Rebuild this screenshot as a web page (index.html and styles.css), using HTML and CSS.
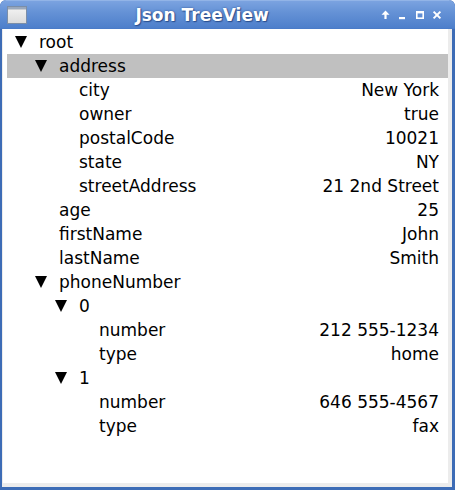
FILE: index.html
```html
<!DOCTYPE html>
<html>
<head>
<meta charset="utf-8">
<title>Json TreeView</title>
<link rel="stylesheet" href="styles.css">
</head>
<body>
<div class="window">
  <div class="titlebar">
    <div class="appicon"><div class="appicon-bar"></div></div>
    <div class="title">Json TreeView</div>
    <svg class="buttons" width="62" height="10" viewBox="0 0 62 10">
      <path d="M4.5 0.5 L8.5 4.8 L5.6 4.8 L5.6 9 L3.4 9 L3.4 4.8 L0.5 4.8 Z" fill="#fff"/>
      <rect x="18" y="7" width="6" height="2.2" fill="#fff"/>
      <rect x="35.8" y="1.8" width="6.4" height="6.4" fill="none" stroke="#fff" stroke-width="1.6"/>
      <rect x="35" y="1" width="8" height="2.4" fill="#fff"/>
      <path d="M52.6 1.6 L59.4 8.4 M59.4 1.6 L52.6 8.4" stroke="#fff" stroke-width="2"/>
    </svg>
  </div>
  <div class="client">
    <div class="tree">
      <div class="row l0"><span class="tog"><i class="arrow"></i></span><span class="key">root</span></div>
      <div class="row l1 sel"><span class="tog"><i class="arrow"></i></span><span class="key">address</span></div>
      <div class="row l2"><span class="tog"></span><span class="key">city</span><span class="val">New York</span></div>
      <div class="row l2"><span class="tog"></span><span class="key">owner</span><span class="val">true</span></div>
      <div class="row l2"><span class="tog"></span><span class="key">postalCode</span><span class="val">10021</span></div>
      <div class="row l2"><span class="tog"></span><span class="key">state</span><span class="val">NY</span></div>
      <div class="row l2"><span class="tog"></span><span class="key">streetAddress</span><span class="val">21 2nd Street</span></div>
      <div class="row l1"><span class="tog"></span><span class="key">age</span><span class="val">25</span></div>
      <div class="row l1"><span class="tog"></span><span class="key">firstName</span><span class="val">John</span></div>
      <div class="row l1"><span class="tog"></span><span class="key">lastName</span><span class="val">Smith</span></div>
      <div class="row l1"><span class="tog"><i class="arrow"></i></span><span class="key">phoneNumber</span></div>
      <div class="row l2"><span class="tog"><i class="arrow"></i></span><span class="key">0</span></div>
      <div class="row l3"><span class="tog"></span><span class="key">number</span><span class="val">212 555-1234</span></div>
      <div class="row l3"><span class="tog"></span><span class="key">type</span><span class="val">home</span></div>
      <div class="row l2"><span class="tog"><i class="arrow"></i></span><span class="key">1</span></div>
      <div class="row l3"><span class="tog"></span><span class="key">number</span><span class="val">646 555-4567</span></div>
      <div class="row l3"><span class="tog"></span><span class="key">type</span><span class="val">fax</span></div>
    </div>
  </div>
</div>
</body>
</html>
```
FILE: styles.css
```css
html, body {
  margin: 0;
  padding: 0;
  background: #ffffff;
}
.window {
  width: 455px;
  height: 490px;
  box-sizing: border-box;
  display: flex;
  flex-direction: column;
  background: #3d6cb6;
  border-radius: 6px 6px 0 0;
  overflow: hidden;
  font-family: "DejaVu Sans", sans-serif;
}
.titlebar {
  height: 29px;
  flex: none;
  display: flex;
  align-items: center;
  padding: 0 12px 0 7px;
  background: linear-gradient(to bottom, #a9c5ee 0px, #7ba3e0 1px, #6592d6 12px, #4d7fcb 28px, #4677c5 29px);
  border-radius: 6px 6px 0 0;
}
.appicon {
  width: 18px;
  height: 16px;
  border: 1px solid #7b8ea8;
  background: linear-gradient(to bottom, #f4f4f4, #dcdcdc);
  box-sizing: content-box;
  margin-top: 1px;
}
.appicon-bar {
  height: 2px;
  background: #9aa8bc;
  border-bottom: 1px solid #c8ccd2;
}
.title {
  flex: 1;
  text-align: center;
  color: #ffffff;
  font-weight: bold;
  font-size: 17px;
  text-shadow: 0 0 2px #2a4f8f, 1px 1px 1px #2a4f8f;
  padding-right: 4px;
}
.buttons {
  display: block;
  margin-top: 1px;
}
.client {
  flex: 1;
  margin: 0 3px 3px 2px;
  background: #ececec;
  padding: 0 4px 4px 1px;
  display: flex;
}
.tree {
  flex: 1;
  background: #ffffff;
  padding: 1px 0 0 4px;
}
.row {
  height: 24px;
  display: flex;
  align-items: center;
  font-size: 17px;
  line-height: 24px;
  color: #000000;
  padding-right: 9px;
}
.row.sel {
  background: #c0c0c0;
}
.l0 { padding-left: 8px; }
.l1 { padding-left: 28px; }
.l2 { padding-left: 48px; }
.l3 { padding-left: 68px; }
.tog {
  width: 24px;
  height: 24px;
  flex: none;
  display: flex;
  align-items: center;
}
.arrow {
  display: block;
  width: 0;
  height: 0;
  border-left: 6px solid transparent;
  border-right: 6px solid transparent;
  border-top: 12px solid #000000;
  margin-top: -1px;
}
.key {
  flex: 1;
}
.val {
  text-align: right;
}
```
